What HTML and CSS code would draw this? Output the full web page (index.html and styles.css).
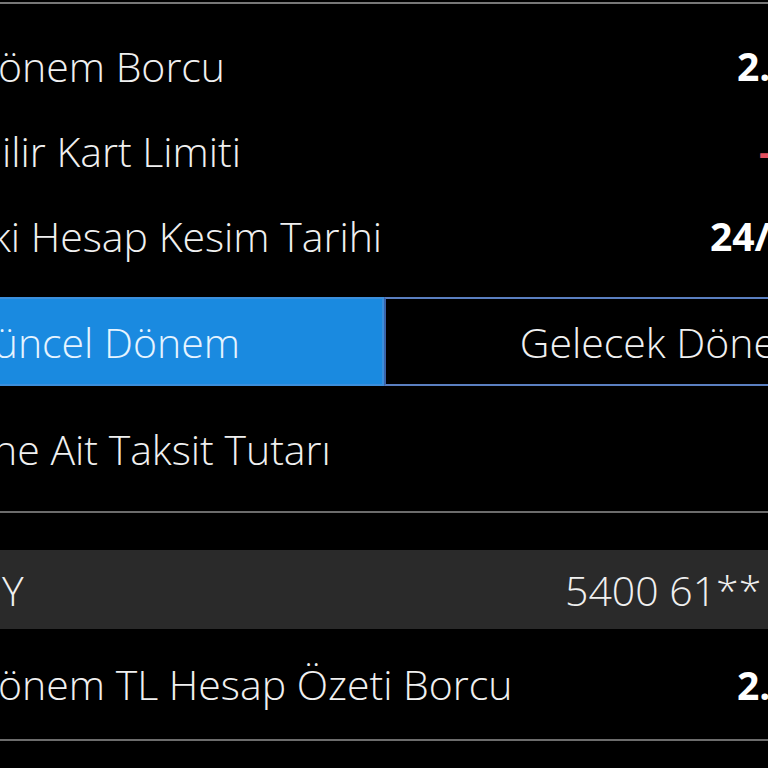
FILE: index.html
```
<!DOCTYPE html>
<html lang="tr">
<head>
<meta charset="utf-8">
<title>Kart Detay</title>
<link rel="stylesheet" href="styles.css">
</head>
<body>
<div class="screen">
  <div class="topline"></div>
  <div class="info">
    <div class="row">
      <span class="label lbl-a">önem Borcu</span>
      <span class="value amt">2.458,30 TL</span>
    </div>
    <div class="row">
      <span class="label lbl-b">ilir Kart Limiti</span>
      <span class="value neg">-1.250,00 TL</span>
    </div>
    <div class="row">
      <span class="label lbl-c">ki Hesap Kesim Tarihi</span>
      <span class="value date">24/05/2019</span>
    </div>
  </div>
  <div class="tabs">
    <div class="tab active">Güncel Dönem</div>
    <div class="tab">Gelecek Dönem</div>
  </div>
  <div class="section">
    <span class="label lbl-d">ne Ait Taksit Tutarı</span>
  </div>
  <div class="rule"></div>
  <div class="band">
    <span class="label lbl-e">Y</span>
    <span class="cardno">5400 61** **** 4417</span>
  </div>
  <div class="row last">
    <span class="label lbl-a">önem TL Hesap Özeti Borcu</span>
    <span class="value amt">2.458,30 TL</span>
  </div>
  <div class="rule"></div>
</div>
</body>
</html>
```
FILE: styles.css
```
html, body {
  margin: 0;
  padding: 0;
  background: #000;
  overflow: hidden;
}
.screen {
  width: 768px;
  height: 768px;
  overflow: hidden;
  background: #000;
  color: #f0f0f0;
  font-family: "Open Sans", "Noto Sans", sans-serif;
  font-weight: 300;
  font-size: 41px;
  display: flex;
  flex-direction: column;
}
.topline {
  height: 2px;
  margin-top: 2px;
  background: #777;
  flex: none;
}
.info {
  padding-top: 19px;
  display: flex;
  flex-direction: column;
}
.row {
  height: 85px;
  display: flex;
  align-items: center;
  white-space: nowrap;
  flex: none;
}
.label {
  flex: 1;
  white-space: nowrap;
}
.lbl-a { margin-left: -2px; }
.lbl-b { margin-left: 2px; }
.lbl-c { margin-left: -9px; }
.lbl-d { margin-left: -7px; }
.lbl-e { margin-left: 2px; }
.value {
  flex: none;
  white-space: nowrap;
  font-weight: 700;
  font-size: 39px;
  color: #fff;
}
.amt { width: 31px; }
.neg { width: 9px; color: #e2505e; }
.date { width: 58px; }
.tabs {
  margin-top: 19px;
  margin-left: -180px;
  width: 1128px;
  height: 89px;
  display: flex;
  flex: none;
}
.tab {
  flex: 1;
  display: flex;
  align-items: center;
  justify-content: center;
  box-sizing: border-box;
  border: 2px solid #5a7fc0;
  color: #f0f0f0;
}
.tab.active {
  background: #1a8ae0;
  border-color: #3c8fdc;
  color: #e6f4ff;
}
.tab.active + .tab {
  border-left-color: #3a63a8;
}
.section {
  height: 125px;
  display: flex;
  align-items: center;
  flex: none;
}
.rule {
  height: 2px;
  background: #6c6c6c;
  flex: none;
}
.band {
  margin-top: 37px;
  height: 79px;
  background: #2a2a2a;
  display: flex;
  align-items: center;
  flex: none;
  white-space: nowrap;
}
.cardno {
  flex: none;
  width: 203px;
  white-space: nowrap;
}
.row.last {
  height: 110px;
}
```
